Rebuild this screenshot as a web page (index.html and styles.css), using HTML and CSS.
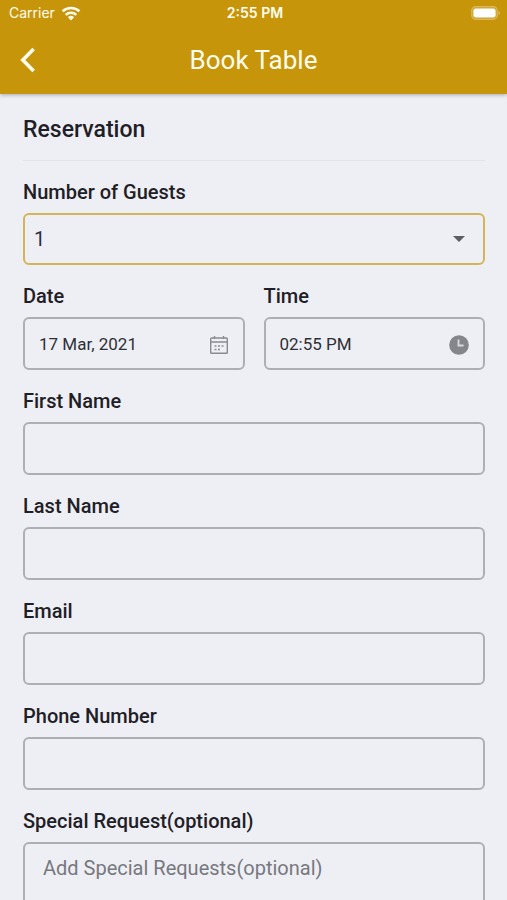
FILE: index.html
```html
<!DOCTYPE html>
<html lang="en">
<head>
<meta charset="utf-8">
<meta name="viewport" content="width=device-width, initial-scale=1">
<title>Book Table</title>
<link rel="stylesheet" href="styles.css">
</head>
<body>
<div class="screen">
  <header class="top">
    <div class="status">
      <span class="carrier">Carrier
        <svg width="20" height="15" viewBox="0 0 20 15" fill="none" stroke="#fffdf0" stroke-width="2.6" aria-hidden="true">
          <path d="M1.6 5.3a12.2 12.2 0 0 1 16.8 0"/>
          <path d="M4.7 8.9a7.7 7.7 0 0 1 10.6 0"/>
          <path d="M10 14.4 6.9 11.2a4.500 4.500 0 0 1 6.200 0z" fill="#fffdf0" stroke="none"/>
        </svg>
      </span>
      <span class="clock">2:55 PM</span>
      <svg class="battery" width="30" height="14" viewBox="0 0 30 14" aria-hidden="true">
        <rect x=".7" y=".7" width="25.6" height="12.6" rx="4" fill="#cfa22a" stroke="#dab95c" stroke-width="1.2"/>
        <rect x="2.4" y="2.4" width="22.2" height="9.2" rx="2.4" fill="#fff"/>
        <path d="M27.6 5v4c1.8-.6 1.8-3.4 0-4z" fill="#dfc06a"/>
      </svg>
    </div>
    <div class="bar">
      <button class="back" type="button" aria-label="Back">
        <svg width="16" height="26" viewBox="0 0 16 26" fill="none" stroke="#fffdf0" stroke-width="3.6"><path d="M13.6 2 2.8 13l10.8 11"/></svg>
      </button>
      <h1>Book Table</h1>
    </div>
  </header>
  <main class="content">
    <h2>Reservation</h2>
    <form>
      <div class="field">
        <label for="guests">Number of Guests</label>
        <div class="box active">
          <select id="guests"><option>1</option><option>2</option><option>3</option><option>4</option></select>
          <svg class="caret" width="12" height="6" viewBox="0 0 12 6" aria-hidden="true"><path d="M0 0h12L6 6z" fill="#5c5e63"/></svg>
        </div>
      </div>
      <div class="row">
        <div class="field">
          <label for="date">Date</label>
          <div class="box">
            <input class="picker" id="date" type="text" value="17 Mar, 2021">
            <svg class="icon" width="20" height="20" viewBox="0 0 20 20" fill="none" stroke="#8b8c91" aria-hidden="true">
              <rect x="1.7" y="3" width="16.6" height="15.3" rx=".8" stroke-width="1.4"/>
              <path d="M1.7 7h16.6M5.500 1v3M14.500 1v3" stroke-width="1.4"/>
              <path d="M5.500 11h2m1.500 0h2m1.500 0h2M5.500 14.500h2m1.500 0h2" stroke-width="1.5"/>
            </svg>
          </div>
        </div>
        <div class="field">
          <label for="time">Time</label>
          <div class="box">
            <input class="picker" id="time" type="text" value="02:55 PM">
            <svg class="icon" width="20" height="20" viewBox="0 0 20 20" aria-hidden="true">
              <circle cx="10" cy="10" r="9.8" fill="#85868b"/>
              <path d="M9.500 4.500v6H14.500" fill="none" stroke="#d9dae0" stroke-width="1.8"/>
            </svg>
          </div>
        </div>
      </div>
      <div class="field">
        <label for="first">First Name</label>
        <div class="box"><input id="first" type="text"></div>
      </div>
      <div class="field">
        <label for="last">Last Name</label>
        <div class="box"><input id="last" type="text"></div>
      </div>
      <div class="field">
        <label for="email">Email</label>
        <div class="box"><input id="email" type="email"></div>
      </div>
      <div class="field">
        <label for="phone">Phone Number</label>
        <div class="box"><input id="phone" type="tel"></div>
      </div>
      <div class="field">
        <label for="request">Special Request(optional)</label>
        <div class="box"><textarea id="request" rows="4" placeholder="Add Special Requests(optional)"></textarea></div>
      </div>
    </form>
  </main>
</div>
</body>
</html>
```
FILE: styles.css
```css
* {
  box-sizing: border-box;
}

body {
  margin: 0;
  background: #eeeff5;
  color: #1f2025;
  font-family: Roboto, "Liberation Sans", sans-serif;
}

.screen {
  display: flex;
  flex-direction: column;
  height: 100vh;
}

.top {
  position: relative;
  flex: none;
  background: #c79509;
  color: #fffdf0;
  box-shadow: 0 1px 4px rgba(60, 60, 80, 0.4);
}

.status {
  display: grid;
  grid-template-columns: 1fr auto 1fr;
  align-items: center;
  height: 26px;
  padding: 0 6px 0 9px;
  font: 14px/20px Inter, sans-serif;
}

.carrier {
  display: flex;
  align-items: center;
  gap: 6px;
}

.clock {
  font-weight: 600;
}

.battery {
  justify-self: end;
}

.bar {
  display: grid;
  grid-template-columns: 48px 1fr 48px;
  align-items: center;
  height: 68px;
}

.back {
  display: flex;
  padding: 0 0 0 20px;
  border: 0;
  background: none;
}

h1 {
  margin: 0;
  font-size: 26px;
  line-height: 32px;
  font-weight: 400;
  text-align: center;
}

.content {
  flex: 1;
  min-height: 0;
  overflow-y: auto;
  scrollbar-width: none;
  padding: 23px 22px 24px 23px;
}

h2 {
  margin: 0 0 19px;
  padding-bottom: 17px;
  border-bottom: 1px solid #e2e3e8;
  font-size: 23px;
  line-height: 26px;
  font-weight: 500;
}

form {
  display: flex;
  flex-direction: column;
  gap: 19px;
}

.row {
  display: grid;
  grid-template-columns: 1fr 1fr;
  gap: 19px;
}

.field {
  display: flex;
  flex-direction: column;
  gap: 9px;
  min-width: 0;
}

label {
  font-size: 20px;
  line-height: 24px;
  font-weight: 500;
}

.box {
  display: flex;
  align-items: center;
  min-height: 53px;
  border: 2px solid #aeafb4;
  border-radius: 6px;
}

.active {
  min-height: 52px;
  border-color: #d3b458;
}

input,
select,
textarea {
  flex: 1;
  min-width: 0;
  height: 48px;
  padding: 0 18px;
  border: 0;
  outline: 0;
  background: none;
  color: #2e2f34;
  font: 20px/24px Roboto, "Liberation Sans", sans-serif;
}

select {
  appearance: none;
  padding: 0 9px;
}

.caret {
  margin-right: 18px;
}

.picker {
  padding: 0 14px;
  font-size: 17px;
}

.icon {
  flex: none;
  margin: 3px 14px 0 0;
}

textarea {
  display: block;
  height: 120px;
  padding: 12px 18px;
  resize: none;
}

textarea::placeholder {
  color: #77787d;
  opacity: 1;
}
```
